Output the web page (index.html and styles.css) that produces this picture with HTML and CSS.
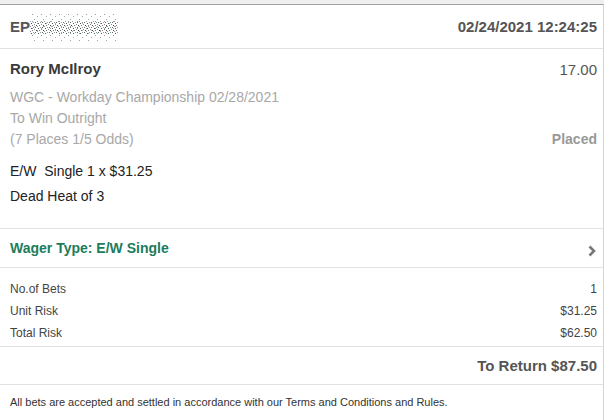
FILE: index.html
```html
<!DOCTYPE html>
<html lang="en">
<head>
<meta charset="UTF-8">
<meta name="viewport" content="width=device-width, initial-scale=1.0">
<title>Bet Receipt</title>
<link rel="stylesheet" href="styles.css">
</head>
<body>

<div class="receipt">
    <!-- ヘッダー -->
    <div class="receipt-head">
        <div class="ref">
            <span>EP</span>
            <svg class="masked" width="88" height="28" viewBox="0 0 88 28">
                <defs>
                    <pattern id="noise" width="7" height="5" patternUnits="userSpaceOnUse">
                        <rect x="1" y="0" width="1" height="1" fill="#555"/>
                        <rect x="4" y="1" width="1" height="1" fill="#888"/>
                        <rect x="6" y="2" width="1" height="1" fill="#444"/>
                        <rect x="2" y="2" width="1" height="1" fill="#777"/>
                        <rect x="0" y="3" width="1" height="1" fill="#999"/>
                        <rect x="5" y="4" width="1" height="1" fill="#666"/>
                        <rect x="3" y="4" width="1" height="1" fill="#7a9"/>
                    </pattern>
                    <pattern id="noise2" width="9" height="7" patternUnits="userSpaceOnUse">
                        <rect x="2" y="1" width="1" height="1" fill="#999"/>
                        <rect x="7" y="3" width="1" height="1" fill="#aaa"/>
                        <rect x="4" y="6" width="1" height="1" fill="#8ab"/>
                    </pattern>
                </defs>
                <rect x="0" y="0" width="88" height="28" fill="url(#noise2)"/>
                <rect x="0" y="8" width="88" height="13" fill="url(#noise)"/>
            </svg>
        </div>
        <div class="stamp">02/24/2021 12:24:25</div>
    </div>

    <!-- 選択内容 -->
    <div class="selection">
        <div class="line-between">
            <span class="runner">Rory McIlroy</span>
            <span class="price">17.00</span>
        </div>
        <div class="event">
            <div>WGC - Workday Championship 02/28/2021</div>
            <div>To Win Outright</div>
            <div class="line-between">
                <span>(7 Places 1/5 Odds)</span>
                <span class="status">Placed</span>
            </div>
        </div>
        <div class="stake">
            <div>E/W&nbsp; Single 1 x $31.25</div>
            <div>Dead Heat of 3</div>
        </div>
    </div>

    <!-- ベットタイプ -->
    <div class="wager line-between">
        <span>Wager Type: E/W Single</span>
        <svg class="chevron" width="10" height="14" viewBox="0 0 10 14">
            <polyline points="2.5,2.5 7,7 2.5,11.5" fill="none" stroke="#777" stroke-width="2.6"/>
        </svg>
    </div>

    <!-- リスク -->
    <div class="risk">
        <div class="line-between"><span>No.of Bets</span><span>1</span></div>
        <div class="line-between"><span>Unit Risk</span><span>$31.25</span></div>
        <div class="line-between"><span>Total Risk</span><span>$62.50</span></div>
    </div>

    <div class="returns">To Return $87.50</div>

    <div class="terms">All bets are accepted and settled in accordance with our Terms and Conditions and Rules.</div>
</div>

</body>
</html>
```

FILE: styles.css
```css
body {
    font-family: "Liberation Sans", Arial, sans-serif;
    margin: 0;
    padding: 4px 0 0;
    background-color: #efefef;
}

.receipt {
    background-color: #ffffff;
    border-top: 1px solid #a3a3a3;
    border-right: 1px solid #d6d6d6;
    min-height: 415px;
}

.line-between {
    display: flex;
    justify-content: space-between;
    align-items: center;
}

/* ヘッダー */
.receipt-head {
    height: 43px;
    padding: 0 6px 0 10px;
    display: flex;
    justify-content: space-between;
    align-items: center;
    border-bottom: 1px solid #e2e2e2;
    font-size: 15px;
    font-weight: bold;
    color: #555;
}

.ref {
    display: flex;
    align-items: center;
}

.masked {
    display: block;
    margin-top: 1px;
}

/* 選択内容 */
.selection {
    padding: 8px 6px 19px 10px;
    border-bottom: 1px solid #e2e2e2;
}

.runner {
    font-size: 15px;
    font-weight: bold;
    color: #3a3a3a;
    line-height: 20px;
}

.price {
    font-size: 15px;
    color: #555;
    line-height: 20px;
    margin-top: 3px;
}

.event {
    margin-top: 7px;
    font-size: 14px;
    line-height: 21px;
    color: #a8a8a8;
}

.status {
    font-weight: bold;
    color: #999;
}

.stake {
    margin-top: 9px;
    font-size: 14px;
    line-height: 25px;
    color: #222;
}

/* ベットタイプ */
.wager {
    height: 39px;
    padding: 0 6px 0 10px;
    box-sizing: border-box;
    border-bottom: 1px solid #e2e2e2;
    font-size: 14px;
    font-weight: bold;
    color: #1b7c5c;
}

.chevron {
    display: block;
    margin-top: 5px;
}

/* リスク */
.risk {
    padding: 10px 6px 2px 10px;
    border-bottom: 1px solid #e2e2e2;
    font-size: 12px;
    line-height: 22px;
    color: #444;
}

.returns {
    height: 37px;
    line-height: 37px;
    padding: 0 6px;
    text-align: right;
    border-bottom: 1px solid #e2e2e2;
    font-size: 15px;
    font-weight: bold;
    color: #555;
}

.terms {
    padding: 10px 10px;
    font-size: 11px;
    line-height: 14px;
    color: #333;
}
```
